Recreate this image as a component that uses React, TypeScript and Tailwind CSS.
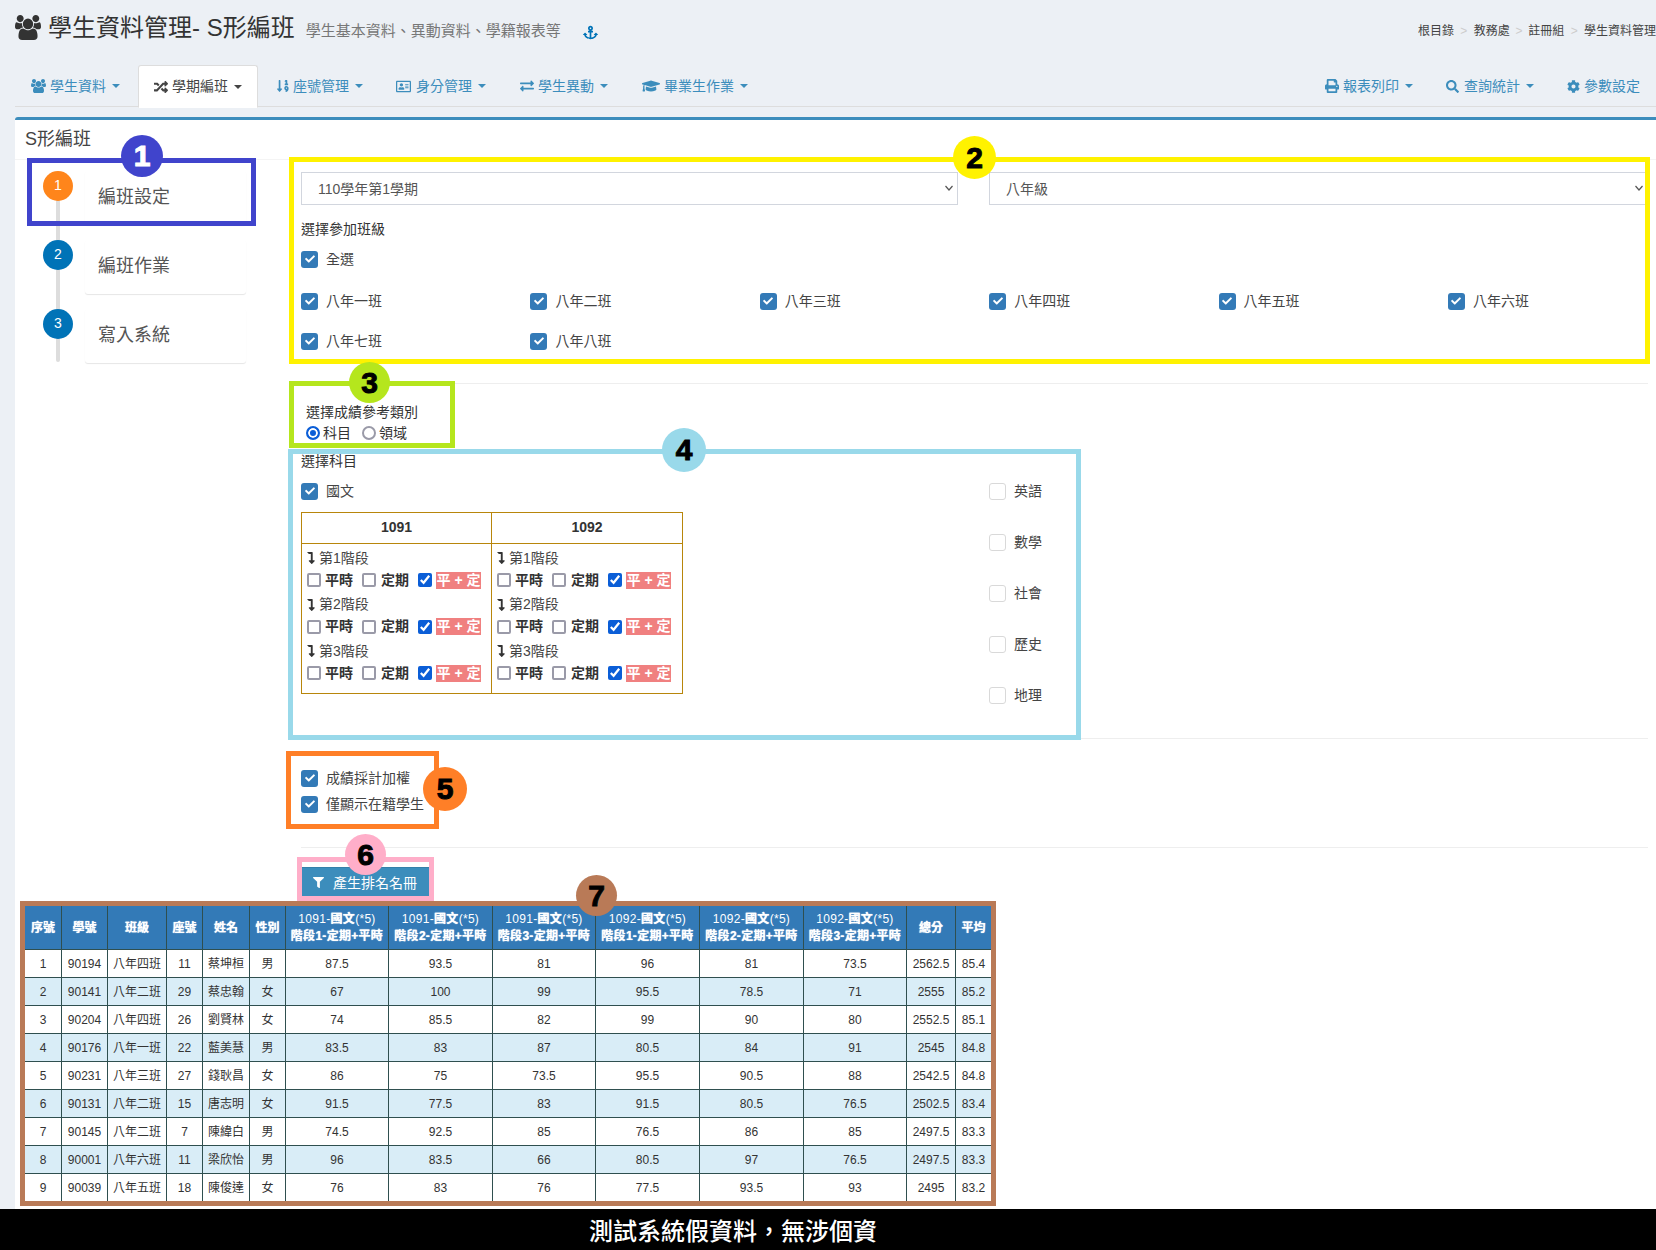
import React from "react";
import {
  FaRandom, FaSortNumericDown, FaRegAddressCard, FaExchangeAlt, FaGraduationCap,
  FaPrint, FaSearch, FaCog, FaAnchor, FaFilter, FaLevelDownAlt, FaCheck,
} from "react-icons/fa";

const Users = ({ w, h }: { w: number; h: number }) => (
  <svg width={w} height={h} viewBox="0 0 1920 1792" fill="currentColor" preserveAspectRatio="none" className="shrink-0">
    <path d="M593 896q-162 5-265 128h-134q-82 0-138-40.500t-56-118.500q0-353 124-353 6 0 43.500 21t97.500 42.500 119 21.500q67 0 133-23-5 37-5 66 0 139 81 257zm1071 637q0 120-73 189.500t-194 69.500h-874q-121 0-194-69.500t-73-189.500q0-53 3.500-103.500t14-109 26.500-108.500 43-97.500 62-81 85.500-53.500 111.500-20q10 0 43 21.500t73 48 107 48 135 21.500 135-21.500 107-48 73-48 43-21.500q61 0 111.500 20t85.500 53.500 62 81 43 97.500 26.500 108.500 14 109 3.500 103.500zm-1024-1277q0 106-75 181t-181 75-181-75-75-181 75-181 181-75 181 75 75 181zm704 384q0 159-112.500 271.500t-271.500 112.500-271.500-112.500-112.500-271.500 112.500-271.500 271.500-112.500 271.500 112.500 112.500 271.500zm576 225q0 78-56 118.500t-138 40.500h-134q-103-123-265-128 81-118 81-257 0-29-5-66 66 23 133 23 59 0 119-21.500t97.500-42.500 43.500-21q124 0 124 353zm-128-609q0 106-75 181t-181 75-181-75-75-181 75-181 181-75 181 75 75 181z" />
  </svg>
);

const Caret = () => <span className="ml-[6px] inline-block w-0 h-0 border-x-4 border-x-transparent border-t-4 border-t-current" />;

function NavItem({ icon, label, active, caret = true, gap = "gap-[5px]", extra = "" }: { icon: React.ReactNode; label: string; active?: boolean; caret?: boolean; gap?: string; extra?: string }) {
  return (
    <div className={"px-[15px] flex items-center text-[14px] rounded-t-[3px] " + extra + " " + (active ? "bg-white text-[#444] border border-[#ddd] border-b-white -mb-px h-[43px] px-[14px]" : "h-[42px] text-[#3c8dbc]")}>
      <span className={"flex items-center " + gap}>{icon}<span>{label}</span></span>
      {caret && <Caret />}
    </div>
  );
}

function Check({ label, on = true }: { label: string; on?: boolean }) {
  return (
    <label className="flex items-center h-[18px] text-[14px] text-[#444]">
      <span className={"w-[17px] h-[17px] rounded-[3px] flex items-center justify-center shrink-0 " + (on ? "bg-[#337ab7]" : "bg-white border border-[#d9d9d9]")}>
        {on && <FaCheck className="text-white" size={10} />}
      </span>
      <span className="ml-[8px] whitespace-nowrap">{label}</span>
    </label>
  );
}

function Hr() {
  return <div className="h-px bg-[#eee] w-[1347px]" />;
}

function Sel({ text, w }: { text: string; w: string }) {
  return (
    <div className={"relative " + w}>
      <select className="w-full h-[33px] appearance-none rounded-none border border-[#d2d6de] bg-white pl-[16px] pt-[2px] text-[14px] text-[#555]"><option>{text}</option></select>
      <svg className="absolute right-[5px] top-[13px]" width="8" height="6" viewBox="0 0 8 6" fill="none" stroke="#555" strokeWidth="1.2"><path d="M0.5 1 L4 5 L7.500 1" /></svg>
    </div>
  );
}

function Stage({ n }: { n: number }) {
  const off = "w-[14px] h-[14px] m-0 appearance-none bg-white border-2 border-[#9a9aa8] rounded-[2px]";
  return (
    <div>
      <div className="flex items-center h-[20px] text-[14px] text-[#444]">
        <FaLevelDownAlt size={12} className="ml-[-2px] mr-[2px] text-[#333]" />
        第{n}階段
      </div>
      <div className="flex items-center h-[22px] mt-px text-[14px] font-bold text-[#333]">
        <input type="checkbox" readOnly className={off} />
        <span className="ml-[4px] w-[37px]">平時</span>
        <input type="checkbox" readOnly className={off} />
        <span className="ml-[5px] w-[37px]">定期</span>
        <input type="checkbox" readOnly checked className="w-[14px] h-[14px] m-0 accent-[#0b5ed7]" />
        <span className="ml-[4px] h-[17px] w-[45px] leading-[17px] bg-[#f08080] text-white text-center whitespace-nowrap">平 + 定</span>
      </div>
    </div>
  );
}

function YearCell() {
  return (
    <td className="border border-[#b8860b] align-top pl-[5px] pt-[4px]">
      <div className="flex flex-col gap-[3.5px]">
        <Stage n={1} />
        <Stage n={2} />
        <Stage n={3} />
      </div>
    </td>
  );
}

const headers = ["序號", "學號", "班級", "座號", "姓名", "性別"];
const scoreHeaders = [
  ["1091-", "階段1-定期+平時"],
  ["1091-", "階段2-定期+平時"],
  ["1091-", "階段3-定期+平時"],
  ["1092-", "階段1-定期+平時"],
  ["1092-", "階段2-定期+平時"],
  ["1092-", "階段3-定期+平時"],
];
const rows = [
  ["1", "90194", "八年四班", "11", "蔡坤桓", "男", "87.5", "93.5", "81", "96", "81", "73.5", "2562.5", "85.4"],
  ["2", "90141", "八年二班", "29", "蔡忠翰", "女", "67", "100", "99", "95.5", "78.5", "71", "2555", "85.2"],
  ["3", "90204", "八年四班", "26", "劉賢林", "女", "74", "85.5", "82", "99", "90", "80", "2552.5", "85.1"],
  ["4", "90176", "八年一班", "22", "藍美慧", "男", "83.5", "83", "87", "80.5", "84", "91", "2545", "84.8"],
  ["5", "90231", "八年三班", "27", "錢耿昌", "女", "86", "75", "73.5", "95.5", "90.5", "88", "2542.5", "84.8"],
  ["6", "90131", "八年二班", "15", "唐志明", "女", "91.5", "77.5", "83", "91.5", "80.5", "76.5", "2502.5", "83.4"],
  ["7", "90145", "八年二班", "7", "陳緯白", "男", "74.5", "92.5", "85", "76.5", "86", "85", "2497.5", "83.3"],
  ["8", "90001", "八年六班", "11", "梁欣怡", "男", "96", "83.5", "66", "80.5", "97", "76.5", "2497.5", "83.3"],
  ["9", "90039", "八年五班", "18", "陳俊達", "女", "76", "83", "76", "77.5", "93.5", "93", "2495", "83.2"],
];

function Badge({ n, cls }: { n: number; cls: string }) {
  return (
    <div className={"absolute rounded-full flex items-center justify-center text-[30px] font-bold text-black leading-none " + cls}>
      <span className="[-webkit-text-stroke:1px_currentColor]">{n}</span>
    </div>
  );
}

const Mark = ({ cls }: { cls: string }) => <div className={"absolute border-[5px] pointer-events-none " + cls} />;

export default function App() {
  return (
    <div className="relative w-[1656px] h-[1250px] overflow-hidden bg-[#ecf0f5] text-[#333] font-['Liberation_Sans','Noto_Sans_CJK_TC',sans-serif] flex flex-col">
      {/* header */}
      <header className="h-[65px] shrink-0 flex items-start justify-between pl-[15px]">
        <div className="flex items-center h-[56px]">
          <span className="text-[#333] -mt-[2px]"><Users w={26} h={25} /></span>
          <h1 className="ml-[7px] text-[24px] text-[#333] whitespace-nowrap">學生資料管理- S形編班</h1>
          <span className="ml-[11px] mt-[6px] text-[15px] text-[#777] whitespace-nowrap">學生基本資料、異動資料、學籍報表等</span>
          <FaAnchor size={15} className="ml-[22px] mt-[8px] text-[#0073b7]" />
        </div>
        <div className="flex items-center h-[62px] text-[12px] text-[#444] whitespace-nowrap w-[238px] overflow-hidden shrink-0">
          <span>根目錄</span><span className="text-[#ccc] w-[21px] text-center">&gt;</span>
          <span>教務處</span><span className="text-[#ccc] w-[20px] text-center">&gt;</span>
          <span>註冊組</span><span className="text-[#ccc] w-[21px] text-center">&gt;</span>
          <span>學生資料管理</span>
        </div>
      </header>

      {/* tabs */}
      <nav className="h-[42px] shrink-0 ml-[15px] border-b border-[#ddd] flex justify-between">
        <div className="flex gap-[4px] pl-px h-[42px]">
          <NavItem extra="-mr-px" icon={<Users w={15} h={14} />} label="學生資料" gap="gap-[4px]" />
          <NavItem active icon={<FaRandom size={14} className="text-[#444]" />} label="學期編班" gap="gap-[4px]" />
          <NavItem extra="-mr-px" icon={<FaSortNumericDown className="w-[12px] h-[16px]" />} label="座號管理" gap="gap-[4px]" />
          <NavItem icon={<FaRegAddressCard size={15} />} label="身分管理" />
          <NavItem icon={<FaExchangeAlt size={14} />} label="學生異動" gap="gap-[4px]" />
          <NavItem icon={<FaGraduationCap size={18} />} label="畢業生作業" gap="gap-[4px]" />
        </div>
        <div className="flex gap-[3px] pr-px">
          <NavItem icon={<FaPrint size={14} />} label="報表列印" gap="gap-[4px]" />
          <NavItem icon={<FaSearch size={13} />} label="查詢統計" />
          <NavItem caret={false} icon={<FaCog size={13} />} label="參數設定" gap="gap-[4px]" />
        </div>
      </nav>

      {/* box */}
      <main className="mt-[10px] ml-[15px] h-[1092px] bg-white border-t-[3px] border-[#3c8dbc] rounded-tl-[3px] flex flex-col">
        <div className="h-[40px] shrink-0 border-b border-[#f4f4f4] pl-[10px] flex items-center text-[18px] text-[#444]">S形編班</div>

        <div className="flex">
          {/* steps */}
          <aside className="relative w-[286px] shrink-0 pt-[11px] flex flex-col gap-[15px]">
            <div className="absolute left-[41px] top-[11px] w-[4px] h-[191px] rounded bg-[#ddd]" />
            {["編班設定", "編班作業", "寫入系統"].map((t, i) => (
              <div key={t} className="relative flex h-[54px]">
                <div className={"ml-[28px] w-[30px] h-[30px] pb-px rounded-full text-white text-[14px] flex items-center justify-center " + (i === 0 ? "bg-[#ff851b]" : "bg-[#0073b7]")}>{i + 1}</div>
                <div className="ml-[12px] w-[161px] rounded-[3px] bg-white shadow-[0_1px_1px_rgba(0,0,0,0.1)] flex items-center pl-[13px] pb-[2px] text-[18px] text-[#555]">{t}</div>
              </div>
            ))}
          </aside>

          {/* form */}
          <div className="flex-1 pt-[12px]">
            <div className="flex w-[1347px] gap-[31px]">
              <Sel text="110學年第1學期" w="w-[657px]" />
              <Sel text="八年級" w="w-[659px]" />
            </div>
            <div className="mt-[14px] h-[20px] leading-[20px] text-[14px] text-[#333]">選擇參加班級</div>
            <div className="mt-[11px]"><Check label="全選" /></div>
            <div className="mt-[24px] grid grid-cols-[repeat(6,229.4px)] gap-y-[22px]">
              {["八年一班", "八年二班", "八年三班", "八年四班", "八年五班", "八年六班", "八年七班", "八年八班"].map((c) => <Check key={c} label={c} />)}
            </div>
            <div className="mt-[33px]"><Hr /></div>

            <div className="ml-[5px] mt-[18px] h-[20px] leading-[20px] text-[14px] text-[#333]">選擇成績參考類別</div>
            <div className="ml-[5px] mt-px h-[20px] flex items-center text-[14px] text-[#333]">
              <input type="radio" name="t" readOnly checked className="w-[14px] h-[14px] m-0 appearance-none rounded-full border-2 border-[#0b5ed7] bg-[#0b5ed7] shadow-[inset_0_0_0_2px_#fff]" />
              <span className="ml-[3px]">科目</span>
              <input type="radio" name="t" readOnly className="w-[14px] h-[14px] m-0 ml-[11px] appearance-none rounded-full border-2 border-[#9a9aa8] bg-white" />
              <span className="ml-[3px]">領域</span>
            </div>
            <div className="mt-[8px] h-[20px] leading-[20px] text-[14px] text-[#333]">選擇科目</div>

            <div className="mt-[11px] flex">
              <div className="w-[688px]">
                <Check label="國文" />
                <table className="mt-[12px] w-[381px] table-fixed border-collapse">
                  <colgroup><col className="w-[190px]" /><col className="w-[191px]" /></colgroup>
                  <thead>
                    <tr className="h-[31px] text-[14px] font-bold text-[#333]">
                      <th className="border border-[#b8860b] pb-px">1091</th>
                      <th className="border border-[#b8860b] pb-px">1092</th>
                    </tr>
                  </thead>
                  <tbody>
                    <tr className="h-[150px]"><YearCell /><YearCell /></tr>
                  </tbody>
                </table>
              </div>
              <div className="flex flex-col gap-[33px]">
                {["英語", "數學", "社會", "歷史", "地理"].map((s) => <Check key={s} label={s} on={false} />)}
              </div>
            </div>

            <div className="mt-[34px]"><Hr /></div>
            <div className="mt-[30px]"><Check label="成績採計加權" /></div>
            <div className="mt-[8px]"><Check label="僅顯示在籍學生" /></div>
            <div className="mt-[34px]"><Hr /></div>
            <button className="mt-[19px] ml-px w-[127px] h-[29px] bg-[#3c8dbc] border-t border-[#367fa9] text-white text-[14px] flex items-center pl-[11px] gap-[9px]">
              <FaFilter size={11} /><span className="pt-[2px]">產生排名名冊</span>
            </button>
          </div>
        </div>

        {/* ranking table */}
        <table className="mt-[9px] ml-[9px] w-[967px] table-fixed border-collapse text-[12px] text-[#333]">
          <colgroup>
            <col className="w-[37px]" /><col className="w-[46px]" /><col className="w-[59px]" /><col className="w-[36px]" /><col className="w-[47px]" /><col className="w-[36px]" />
            <col className="w-[103px]" /><col className="w-[104px]" /><col className="w-[103px]" /><col className="w-[104px]" /><col className="w-[104px]" /><col className="w-[103px]" />
            <col className="w-[49px]" /><col className="w-[36px]" />
          </colgroup>
          <thead>
            <tr className="h-[44px] bg-[#337ab7] text-white font-bold">
              {headers.map((h) => <th key={h} className="border border-[#2f4f4f] font-bold [text-shadow:0_0_1px_#fff]">{h}</th>)}
              {scoreHeaders.map((h, i) => (
                <th key={i} className="border border-[#2f4f4f] font-normal leading-[17px] whitespace-nowrap tracking-[0.3px]">
                  {h[0]}<b className="font-bold [text-shadow:0_0_1px_#fff]">國文</b>(*5)<br /><b className="font-bold [text-shadow:0_0_1px_#fff]">{h[1]}</b>
                </th>
              ))}
              <th className="border border-[#2f4f4f] font-bold [text-shadow:0_0_1px_#fff]">總分</th>
              <th className="border border-[#2f4f4f] font-bold [text-shadow:0_0_1px_#fff]">平均</th>
            </tr>
          </thead>
          <tbody>
            {rows.map((r, i) => (
              <tr key={i} className={"h-[28px] " + (i % 2 ? "bg-[#d9edf7]" : "bg-white")}>
                {r.map((c, j) => <td key={j} className="border border-[#2f4f4f] text-center whitespace-nowrap">{c}</td>)}
              </tr>
            ))}
          </tbody>
        </table>
      </main>

      {/* caption */}
      <footer className="h-[41px] shrink-0 bg-black text-white text-[24px] font-medium flex items-center pl-[589px] pt-[4px] whitespace-nowrap">{"測試系統假資料\uFF0C無涉個資"}</footer>

      {/* annotation frames */}
      <Mark cls="left-[27px] top-[158px] w-[229px] h-[68px] border-[#4044cc]" />
      <Mark cls="left-[289px] top-[157px] w-[1361px] h-[207px] border-[#fff200]" />
      <Mark cls="left-[289px] top-[381px] w-[166px] h-[67px] border-[#b5e61d]" />
      <Mark cls="left-[288px] top-[449px] w-[793px] h-[291px] border-[#99d9ea]" />
      <Mark cls="left-[286px] top-[751px] w-[153px] h-[78px] border-[#ff7f27]" />
      <Mark cls="left-[297px] top-[857px] w-[137px] h-[44px] border-[#ffaec9]" />
      <Mark cls="left-[20px] top-[901px] w-[976px] h-[305px] border-[#b97a57]" />

      <Badge n={1} cls="left-[121px] top-[135px] w-[42px] h-[42px] bg-[#4044cc] !text-white" />
      <Badge n={2} cls="left-[953px] top-[136px] w-[43px] h-[43px] bg-[#fff200]" />
      <Badge n={3} cls="left-[349px] top-[362px] w-[41px] h-[41px] bg-[#b5e61d]" />
      <Badge n={4} cls="left-[662px] top-[428px] w-[44px] h-[44px] bg-[#99d9ea]" />
      <Badge n={5} cls="left-[423px] top-[767px] w-[44px] h-[44px] bg-[#ff7f27]" />
      <Badge n={6} cls="left-[345px] top-[834px] w-[41px] h-[41px] bg-[#ffaec9]" />
      <Badge n={7} cls="left-[576px] top-[875px] w-[41px] h-[41px] bg-[#b97a57]" />
    </div>
  );
}
